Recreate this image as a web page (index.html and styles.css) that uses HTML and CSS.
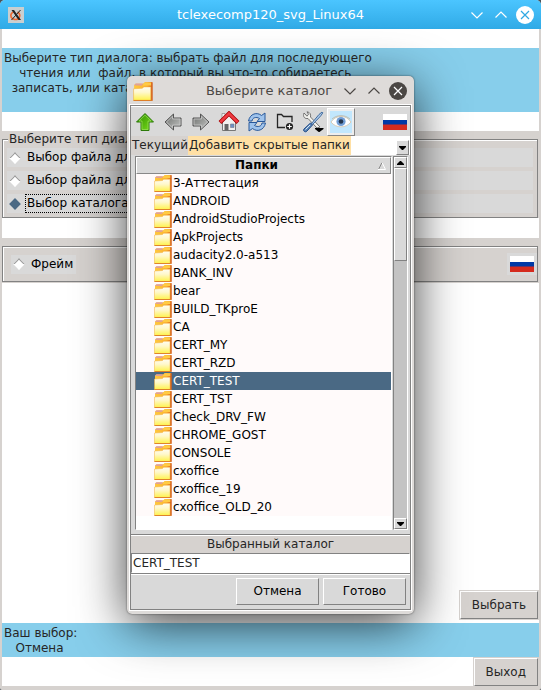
FILE: index.html
```html
<!DOCTYPE html>
<html lang="ru">
<head>
<meta charset="utf-8">
<title>tclexecomp120_svg_Linux64</title>
<link rel="stylesheet" href="styles.css">
</head>
<body>
<svg class="defs" aria-hidden="true">
  <defs>
    <linearGradient id="paper" x1="0" y1="0" x2="0" y2="1"><stop offset="0" stop-color="#fffdf2"/><stop offset=".4" stop-color="#fff8cc"/><stop offset="1" stop-color="#fff24a"/></linearGradient>
    <linearGradient id="back" x1="0" y1="0" x2="1" y2="0"><stop offset="0" stop-color="#ffc93c"/><stop offset=".7" stop-color="#fbb034"/><stop offset="1" stop-color="#d9601a"/></linearGradient>
    <linearGradient id="grey" x1="0" y1="0" x2="1" y2="1"><stop offset="0" stop-color="#6c6e6c"/><stop offset="1" stop-color="#c4c6c4"/></linearGradient>
    <linearGradient id="green" x1="0" y1="0" x2="1" y2="1"><stop offset="0" stop-color="#2f8c00"/><stop offset="1" stop-color="#7be01c"/></linearGradient>
    <symbol id="folder" viewBox="0 0 18 18">
      <path d="M1 5.500V3.500L2.500 2.500H9L11 1h6.500v16.500H1z" fill="url(#back)"/>
      <path d="M1.500 4V3l1-.8H9L8 4z" fill="#dfa09a"/>
      <path d="M10.500 1.300h6V4H8.500z" fill="#ffcb45"/>
      <path d="M17 1.500V17.500" stroke="#d2601f"/>
      <path d="M.5 7 8.500 6.500l1.200-1.200h6.300v12.200H.5z" fill="url(#paper)" stroke="#f0b040" stroke-width=".5"/>
      <path d="M.5 17.500H17.500" stroke="#dc7a26" stroke-width=".9"/>
    </symbol>
    <symbol id="flag" viewBox="0 0 24 16"><path fill="#fff" d="M0 0h24v6H0z"/><path fill="#0039a6" d="M0 6h24v5H0z"/><path fill="#d52b1e" d="M0 10.500h24V16H0z"/></symbol>
    <symbol id="down" viewBox="0 0 12 12"><path d="M.5 3.500 6 9l5.500-5.500" fill="none" stroke="currentColor" stroke-width="1.200"/></symbol>
    <symbol id="up" viewBox="0 0 12 12"><path d="M.5 8.500 6 3l5.500 5.500" fill="none" stroke="currentColor" stroke-width="1.200"/></symbol>
    <symbol id="cross" viewBox="0 0 18 18"><circle cx="9" cy="9" r="9" fill="currentColor"/><path d="m5 5 8 8m0-8-8 8" fill="none" stroke="var(--cross)" stroke-width="1.200"/></symbol>
  </defs>
</svg>

<main class="window">
  <header class="titlebar main-title">
    <svg class="x-icon" viewBox="0 0 16 16"><path fill="#c9cfd0" d="M0 0h16v16H0z"/><path d="M9.500 5A4.500 4 0 1 1 7 4.500" fill="none" stroke="#f06a32" stroke-width="1.700"/><path d="m3.500 3 7 10h2.500L6 3z" fill="#222"/><path d="m12.500 3-9 10" stroke="#222"/></svg>
    <h1>tclexecomp120_svg_Linux64</h1>
    <button aria-label="Свернуть"><svg><use href="#down"/></svg></button>
    <button aria-label="Развернуть"><svg><use href="#up"/></svg></button>
    <button class="close" aria-label="Закрыть"><svg><use href="#cross"/></svg></button>
  </header>

  <div class="client">
    <p class="banner intro">Выберите тип диалога: выбрать файл для последующего
    чтения или  файл, в который вы что-то собираетесь
  записать, или каталог</p>

    <section class="choices">
      <fieldset>
        <legend>Выберите тип диалога</legend>
        <label class="radio"><input type="radio" name="kind"><span>Выбор файла для</span></label>
        <label class="radio"><input type="radio" name="kind"><span>Выбор файла для</span></label>
        <label class="radio focused"><input type="radio" name="kind" checked><span>Выбор каталога/</span></label>
      </fieldset>
    </section>

    <section class="frame-panel">
      <div class="groove">
        <label class="radio"><input type="radio" name="frame"><span>Фрейм</span></label>
        <div class="flag-chip"><svg class="flag"><use href="#flag"/></svg></div>
      </div>
    </section>

    <div class="space"></div>
    <div class="action select-action"><button class="push">Выбрать</button></div>
    <p class="banner result">Ваш выбор:
   Отмена</p>
    <div class="action"><button class="push">Выход</button></div>
  </div>
</main>

<section class="dialog" role="dialog" aria-labelledby="dialog-title">
  <header class="titlebar dialog-bar">
    <svg class="title-folder"><use href="#folder"/></svg>
    <h2 id="dialog-title">Выберите каталог</h2>
    <button aria-label="Свернуть"><svg><use href="#down"/></svg></button>
    <button aria-label="Развернуть"><svg><use href="#up"/></svg></button>
    <button class="close" aria-label="Закрыть"><svg><use href="#cross"/></svg></button>
  </header>
  <div class="dialog-body">
    <div class="toolbar">
      <button aria-label="Вверх"><svg viewBox="0 0 22 22"><path d="M11 2.500 19.500 11H15v8.500H7V11H2.500z" fill="url(#green)" stroke="#2c7a08"/><path d="M11 4.200 17 10h-3v8.500H8V10H5z" fill="none" stroke="#9be05c" stroke-width=".7"/></svg></button>
      <button aria-label="Назад"><svg viewBox="0 0 22 22"><path d="M3 11l8.500-8v4H19v8h-7.500v4z" fill="url(#grey)" stroke="#555"/><path d="m4.500 11 6-5.800V8H18v6h-7.500v2.800z" fill="none" stroke="#c8c8c8" stroke-width=".8"/></svg></button>
      <button aria-label="Вперёд"><svg viewBox="0 0 22 22"><path d="m19 11-8.500-8v4H3v8h7.500v4z" fill="url(#grey)" stroke="#555"/><path d="m17.500 11-6-5.800V8H4v6h7.500v2.800z" fill="none" stroke="#c8c8c8" stroke-width=".8"/></svg></button>
      <button aria-label="Домой"><svg viewBox="0 0 22 22"><path d="M4.500 10 11 4l6.500 6v9.500h-13z" fill="#f1f1ef" stroke="#777"/><path d="M4 2.500h3V7L4 9.500z" fill="#f4f4f4" stroke="#888" stroke-width=".7"/><path d="m2 11.500 9-9 9 9" fill="none" stroke="#a40000" stroke-width="4"/><path d="m2.300 11.200 8.700-8.700 8.700 8.700" fill="none" stroke="#ef3b42" stroke-width="2.600"/><path fill="#666" d="M6.500 13h4v6.500h-4z"/><path fill="#6d92c4" stroke="#778" stroke-width=".6" d="M12.500 13h3.500v3.500h-3.500z"/></svg></button>
      <button aria-label="Обновить"><svg viewBox="0 0 22 22"><path d="M2.500 10C4 2.500 11 .8 15.500 4.500L19 2v8.500h-8l2.500-3C10 5.500 6.500 6.500 6 10z" fill="#9fc3ec" stroke="#28589a"/><path d="M19.500 12C18 19.500 11 21.200 6.500 17.500L3 20v-8.500h8l-2.500 3c3.500 2 7 1 7.500-2.500z" fill="#9fc3ec" stroke="#28589a"/></svg></button>
      <button aria-label="Создать папку"><svg viewBox="0 0 22 22"><path d="M11 16.500H3.500v-13h4l2 2h8.500V11" fill="none" stroke="#252525" stroke-width="1.300"/><circle cx="15.500" cy="15.500" r="3.600" fill="#222"/><path d="M15.500 13.200v4.600M13.200 15.500h4.600" stroke="#fff" stroke-width="1.200"/></svg></button>
      <button aria-label="Настройка"><svg viewBox="0 0 22 22"><path d="M2 2c-1.500 4 1 6 4 5.500L15 17l3-1-9.500-10C9 3.500 8 1 5 .8l1.500 2.500L5 5.200z" fill="#f2f2ee" stroke="#666" stroke-width=".9"/><path d="m9.500 12.500 7.500-9 3-2.500.8.800-2 3-8 8.500z" fill="#adc9e8" stroke="#315f96" stroke-width=".9"/><path d="m8.500 12-6.500 6c-1.500 2 1.500 4 3 2l5.500-6z" fill="#5c87b8" stroke="#204a87"/><path d="m8 14-4.500 4.500" stroke="#d6e6f5"/><path d="M13 17h8.500v1L17.500 21h-.8L13 18z" fill="#000"/></svg></button>
      <button class="active" aria-label="Добавить скрытые папки"><svg viewBox="0 0 22 22"><path fill="#c2e7fd" d="M0 0h22v22H0z"/><path d="M1 11C6 3.500 16 3.500 21 11c-5 6.500-15 6.500-20 0z" fill="#fff" stroke="#d9cdb8"/><circle cx="11" cy="10.500" r="4.600" fill="#739fd6"/><circle cx="11" cy="10.500" r="2.300" fill="#24364e"/><path d="M2 8C7 3.500 15 3.500 20 8" fill="none" stroke="#b9b5a7" stroke-width=".8"/></svg></button>
      <svg class="flag"><use href="#flag"/></svg>
    </div>
    <div class="path-row">
      <span class="path-label">Текущий</span>
      <span class="tip">Добавить скрытые папки</span>
      <button class="arrow" aria-label="Открыть список"><svg viewBox="0 0 9 6"><path d="M1 1h7v1L5 5H4L1 2z"/></svg></button>
    </div>
    <div class="list-panel">
      <div class="list">
        <table>
          <thead><tr><th>Папки<svg class="sort" viewBox="0 0 8 8"><path d="M.5 7.500 4 .5" stroke="#888"/><path d="M4 .5 7.500 7.500H0" fill="none" stroke="#fff"/></svg></th></tr></thead>
          <tbody>
            <tr><td><svg><use href="#folder"/></svg>3-Аттестация</td></tr>
            <tr><td><svg><use href="#folder"/></svg>ANDROID</td></tr>
            <tr><td><svg><use href="#folder"/></svg>AndroidStudioProjects</td></tr>
            <tr><td><svg><use href="#folder"/></svg>ApkProjects</td></tr>
            <tr><td><svg><use href="#folder"/></svg>audacity2.0-a513</td></tr>
            <tr><td><svg><use href="#folder"/></svg>BANK_INV</td></tr>
            <tr><td><svg><use href="#folder"/></svg>bear</td></tr>
            <tr><td><svg><use href="#folder"/></svg>BUILD_TKproE</td></tr>
            <tr><td><svg><use href="#folder"/></svg>CA</td></tr>
            <tr><td><svg><use href="#folder"/></svg>CERT_MY</td></tr>
            <tr><td><svg><use href="#folder"/></svg>CERT_RZD</td></tr>
            <tr class="selected"><td><svg><use href="#folder"/></svg>CERT_TEST</td></tr>
            <tr><td><svg><use href="#folder"/></svg>CERT_TST</td></tr>
            <tr><td><svg><use href="#folder"/></svg>Check_DRV_FW</td></tr>
            <tr><td><svg><use href="#folder"/></svg>CHROME_GOST</td></tr>
            <tr><td><svg><use href="#folder"/></svg>CONSOLE</td></tr>
            <tr><td><svg><use href="#folder"/></svg>cxoffice</td></tr>
            <tr><td><svg><use href="#folder"/></svg>cxoffice_19</td></tr>
            <tr><td><svg><use href="#folder"/></svg>cxoffice_OLD_20</td></tr>
          </tbody>
        </table>
      </div>
      <div class="scrollbar">
        <button aria-label="Прокрутить вверх"><svg viewBox="0 0 9 6"><path d="M4 1h1l3 3v1H1V4z"/></svg></button>
        <div class="thumb"></div>
        <button aria-label="Прокрутить вниз"><svg viewBox="0 0 9 6"><path d="M1 1h7v1L5 5H4L1 2z"/></svg></button>
      </div>
    </div>
    <div class="chosen">
      <label for="chosen">Выбранный каталог</label>
      <input id="chosen" type="text" value="CERT_TEST">
    </div>
    <footer>
      <button>Отмена</button>
      <button>Готово</button>
    </footer>
  </div>
</section>
</body>
</html>
```
FILE: styles.css
```css
:root {
  --face: #d9d9d9;
  --warm: #d6d2cf;
  --dark: #828282;
  --sky: #87ceeb;
}
* { box-sizing: border-box; }
body, h1, h2, p, fieldset { margin: 0; }
body {
  background: #4a5258;
  color: #000;
  font: 12px/15px "DejaVu Sans", sans-serif;
}
button, input { font: inherit; color: inherit; }
button { padding: 0; border: 0; background: none; }
svg { display: block; flex: none; }
.defs { position: absolute; width: 0; height: 0; }

.window {
  display: flex;
  flex-direction: column;
  min-height: 100vh;
  overflow: hidden;
  border-radius: 5px 5px 2px 2px;
  background: var(--warm);
}
.titlebar { display: flex; align-items: center; gap: 12px; }
.titlebar h1, .titlebar h2 {
  flex: 1;
  font-size: 13px;
  font-weight: normal;
  text-align: center;
  white-space: nowrap;
}
.titlebar button svg { width: 12px; height: 12px; }
.titlebar .close { margin-left: -3px; }
.titlebar .close svg { width: 18px; height: 18px; }
.main-title {
  --cross: #2fa8e3;
  height: 29px;
  padding: 0 7px 0 8px;
  background: linear-gradient(#4bc5ff, #30aae6);
  color: #fff;
}
.main-title h1 { padding-left: 46px; }
.x-icon { width: 16px; height: 16px; }

.client {
  flex: 1;
  display: flex;
  flex-direction: column;
  margin: 0 2px 4px;
  padding-top: 19px;
  background: #fff;
}
.banner { padding: 3px 2px 1px; background: var(--sky); color: #262626; white-space: pre; }
.intro { height: 64px; }
.result { height: 34px; }

.choices { margin-top: 19px; padding-right: 1px; background: var(--warm); }
.choices fieldset {
  display: flex;
  flex-direction: column;
  gap: 4px;
  min-width: 0;
  padding: 0 4px 4px;
  border: 1px solid var(--dark);
  box-shadow: inset 1px 1px #fff;
}
.choices legend { height: 17px; margin-left: 1px; padding: 1px; background: var(--warm); color: #262626; }
.radio { display: flex; align-items: center; height: 19px; padding: 0 2px; background: var(--face); }
.radio span { padding: 1px; line-height: 15px; }
.radio input {
  appearance: none;
  width: 8px;
  height: 8px;
  margin: 0 7px 0 2px;
  border: 1px solid #fff;
  border-color: #999 #fff #fff #999;
  background: #fff;
  transform: rotate(45deg);
}
.radio input:checked { background: #4a6984; border-color: #4a6984; }
.focused span { outline: 1px dotted #000; }

.frame-panel { margin-top: 20px; padding: 8px 1px 1px 0; background: var(--warm); }
.groove {
  display: flex;
  align-items: center;
  justify-content: space-between;
  height: 36px;
  padding-left: 8px;
  border: 1px solid var(--dark);
  box-shadow: inset 1px 1px #fff;
}
.flag { width: 24px; height: 16px; }
.flag-chip { padding: 3px; background: var(--face); }
.space { flex: 1; }
.action { display: flex; justify-content: flex-end; }
.select-action { margin-bottom: 4px; }
.push {
  height: 28px;
  margin: 1px 1px 0 0;
  padding: 0 11px;
  border: 1px solid;
  border-color: #fff var(--dark) var(--dark) #fff;
  outline: 1px solid var(--warm);
  background: var(--warm);
  color: #262626;
}

.dialog {
  position: absolute;
  top: 76px;
  left: 127px;
  width: 287px;
  padding: 0 3px 4px;
  border-radius: 5px;
  background: #dedbd9;
  box-shadow: 0 0 2px rgba(0, 0, 0, .6), 0 10px 50px rgba(0, 0, 0, .75);
}
.dialog-bar { --cross: #fff; height: 29px; padding: 0 4px 0 3px; color: #4b4744; }
.title-folder { width: 20px; height: 20px; }
.dialog-bar h2 { text-align: right; }
.dialog-body {
  border: 1px solid var(--dark);
  outline: 1px solid #fff;
  background: var(--face);
}
.toolbar {
  display: flex;
  align-items: center;
  height: 30px;
  border-top: 1px solid #fff;
}
.toolbar button { display: grid; place-items: center; width: 28px; height: 28px; }
.toolbar button svg { width: 22px; height: 22px; }
.toolbar .active { border: 1px solid; border-color: #fff #888 #888 #fff; background: #eee; }
.toolbar > .flag { margin: 0 3px 0 auto; }
.path-row { display: flex; height: 19px; background: #fff; color: #262626; }
.path-label { flex: none; padding: 2px 0 2px 1px; background: var(--warm); }
.tip { flex: none; padding: 2px 1px; background: #ffe0a5; white-space: nowrap; }
.path-row .arrow { align-self: flex-end; height: 15px; margin: 0 1px 0 auto; }
.arrow, .scrollbar button {
  display: grid;
  place-items: center;
  width: 13px;
  border: 1px solid;
  border-color: #fff var(--dark) var(--dark) #fff;
  background: var(--face);
}
.arrow svg, .scrollbar svg { width: 9px; height: 6px; }
.list-panel {
  display: flex;
  height: 380px;
  padding: 1px 2px 4px 4px;
  gap: 1px;
  border-bottom: 1px solid var(--dark);
}
.list { flex: 1; border: 1px solid; border-color: var(--dark) #fff #fff var(--dark); background: #fff; }
.list table { width: 100%; border-collapse: collapse; }
.list th {
  position: relative;
  display: flex;
  align-items: center;
  justify-content: center;
  height: 17px;
  padding: 0 14px 0 0;
  border: 1px solid;
  border-color: #fff #888 #888 #fff;
  background: var(--face);
}
.list th .sort { position: absolute; top: 4px; right: 4px; width: 8px; height: 8px; }
.list td {
  display: flex;
  align-items: center;
  height: 18px;
  padding: 0 0 0 18px;
  background: #fffafa;
  white-space: nowrap;
}
.list td svg { width: 18px; height: 18px; margin-right: 1px; }
.list .selected td { background: #4a6984; color: #fff; }
.scrollbar {
  display: flex;
  flex-direction: column;
  width: 15px;
  border: 1px solid;
  border-color: var(--dark) #fff #fff var(--dark);
  background: #c3c3c3;
}
.scrollbar button { height: 11px; }
.thumb {
  height: 93px;
  margin-bottom: auto;
  border: 1px solid;
  border-color: #fff var(--dark) var(--dark) #fff;
  background: var(--face);
}
.chosen { border-top: 1px solid #fff; background: var(--warm); color: #262626; }
.chosen label { display: block; height: 17px; padding-top: 1px; text-align: center; }
.chosen input {
  display: block;
  width: 100%;
  height: 20px;
  padding: 0 1px;
  border: 1px solid;
  border-color: var(--dark) #fff #fff var(--dark);
  background: #fff;
}
.dialog footer {
  display: flex;
  justify-content: flex-end;
  gap: 4px;
  padding: 4px;
  border-top: 1px solid var(--dark);
  box-shadow: inset 0 1px #fff;
}
.dialog footer button {
  width: 83px;
  height: 27px;
  border: 1px solid;
  border-color: #fff var(--dark) var(--dark) #fff;
}
```
